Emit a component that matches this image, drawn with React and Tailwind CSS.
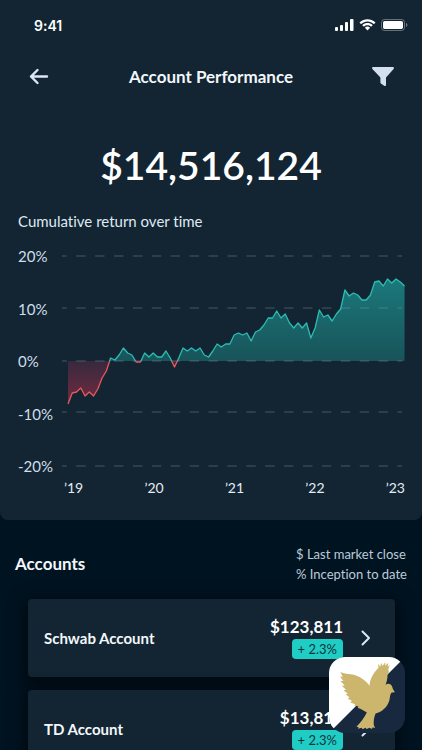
const returns = [
  -43, -32, -31, -27, -35, -31, -35, -28, -17, -10, 3, 1, 6, 13, 8, 6, -1, -1, 8, 4,
  8, 4, 4, 10, 3, -6, 3, 13, 10, 13, 10, 13, 6, 4, 10, 17, 14, 17, 17, 26,
  28, 26, 28, 20, 29, 31, 36, 43, 43, 50, 43, 47, 38, 33, 38, 33, 38, 23, 33, 51,
  44, 46, 40, 47, 52, 71, 65, 68, 66, 61, 61, 66, 79, 80, 75, 82, 78, 82, 79, 75,
];

const ZERO = 115;
const START = 6;
const STEP = 4.26;
const END = START + STEP * (returns.length - 1);
const line = returns.map((v, i) => `${START + i * STEP},${ZERO - v}`).join(" ");
const area = `${START},${ZERO} ${line} ${END},${ZERO}`;
const gridLines = [10, 62, 115, 166, 220];

const accounts = [
  { name: "Schwab Account", value: "$123,811", change: "+ 2.3%" },
  { name: "TD Account", value: "$13,811", change: "+ 2.3%" },
];

function StatusBar() {
  return (
    <div className="flex h-[50px] items-center justify-between pr-[14px] pl-[34px]">
      <span className="font-['Inter',sans-serif] text-[14px] font-semibold">9:41</span>
      <div className="flex items-center gap-[5px]">
        <svg className="h-3 w-[19px]" viewBox="0 0 19 12" fill="#fff" aria-hidden="true">
          <rect x="0" y="8" width="3" height="4" rx="1" />
          <rect x="5" y="6" width="3" height="6" rx="1" />
          <rect x="10" y="3" width="3" height="9" rx="1" />
          <rect x="15" y="0" width="3.5" height="12" rx="1" />
        </svg>
        <svg className="h-3 w-[17px]" viewBox="0 0 17 12" fill="#fff" aria-hidden="true">
          <path d="M8.5 2.4c2.3 0 4.5.9 6.200 2.500.1.1.3.1.4 0l1.200-1.200c.1-.1.1-.3 0-.4C11.900-.9 5.100-.9.7 3.300c-.1.1-.1.3 0 .4l1.200 1.200c.1.1.3.1.4 0C4 3.300 6.200 2.400 8.500 2.400Z" />
          <path d="M8.500 6.300c1.300 0 2.500.5 3.400 1.300.1.1.3.1.4 0l1.200-1.200c.1-.1.1-.3 0-.4-2.800-2.600-7.200-2.600-10 0-.1.1-.1.3 0 .4l1.200 1.200c.1.1.3.1.4 0 .9-.8 2.100-1.300 3.400-1.300Z" />
          <path d="M10.900 9c.1-.1.1-.3 0-.4a3.700 3.700 0 0 0-4.800 0c-.1.1-.1.3 0 .4l2.200 2.300c.1.1.3.1.4 0Z" />
        </svg>
        <svg className="h-3 w-[27px]" viewBox="0 0 27 12" fill="none" aria-hidden="true">
          <rect x="0.500" y="0.500" width="23" height="11" rx="3" stroke="#fff" strokeOpacity="0.35" />
          <rect x="2" y="2" width="20" height="8" rx="1.700" fill="#fff" />
          <path d="M25 4v4c.8-.3 1.400-1.100 1.400-2S25.800 4.300 25 4Z" fill="#fff" fillOpacity="0.4" />
        </svg>
      </div>
    </div>
  );
}

function Header() {
  return (
    <header className="flex h-[54px] items-center justify-between px-7">
      <button type="button" aria-label="Back" className="text-[#dbe6f4]">
        <svg className="h-5 w-[22px]" viewBox="0 0 22 20" fill="none" stroke="currentColor" strokeWidth="2.400" strokeLinecap="round" strokeLinejoin="round">
          <path d="M19 9.500H3M9.500 3 3 9.500 9.500 16" />
        </svg>
      </button>
      <h1 className="text-[17px] font-bold text-[#f2f7fb]">Account Performance</h1>
      <button type="button" aria-label="Filter" className="text-[#d4dfee]">
        <svg className="h-5 w-[22px]" viewBox="0 0 22 20" fill="currentColor">
          <path d="M1.200 0h19.600c1 0 1.500 1.100.8 1.900L14 10.600v7.300c0 1-1 1.500-1.800.9l-3.300-2.400c-.3-.3-.5-.6-.5-1v-4.800L.4 1.900C-.3 1.100.200 0 1.200 0Z" />
        </svg>
      </button>
    </header>
  );
}

function ReturnChart() {
  return (
    <div className="mt-[13px] grid grid-cols-[44px_1fr] pr-[17px] pl-[18px]">
      <div className="flex h-[230px] flex-col justify-between text-[15px] leading-5 text-[#cfdeeb]">
        <span>20%</span>
        <span>10%</span>
        <span>0%</span>
        <span>-10%</span>
        <span>-20%</span>
      </div>
      <svg className="h-[230px] w-full" viewBox="0 0 343 230" preserveAspectRatio="none" role="img" aria-label="Cumulative return over time">
        <defs>
          <linearGradient id="gain" gradientUnits="userSpaceOnUse" x1="0" y1="33" x2="0" y2={ZERO}>
            <stop offset="0" stopColor="#1b7e80" stopOpacity="0.95" />
            <stop offset="1" stopColor="#1a6467" stopOpacity="0.75" />
          </linearGradient>
          <linearGradient id="loss" gradientUnits="userSpaceOnUse" x1="0" y1={ZERO} x2="0" y2="158">
            <stop offset="0" stopColor="#7a3050" stopOpacity="0.35" />
            <stop offset="1" stopColor="#8f2c40" stopOpacity="0.8" />
          </linearGradient>
          <clipPath id="above">
            <rect x="0" y="0" width="343" height={ZERO} />
          </clipPath>
          <clipPath id="below">
            <rect x="0" y={ZERO} width="343" height="115" />
          </clipPath>
        </defs>
        <polygon points={area} fill="url(#gain)" clipPath="url(#above)" />
        <polygon points={area} fill="url(#loss)" clipPath="url(#below)" />
        <g stroke="#8aa0b8" strokeOpacity="0.28" strokeWidth="1.500" strokeDasharray="9.450 9.450" strokeDashoffset="4.700">
          {gridLines.map((y) => (
            <line key={y} x1="0" x2="340" y1={y} y2={y} />
          ))}
        </g>
        <polyline points={line} fill="none" stroke="#2bbdb4" strokeWidth="1.300" strokeLinejoin="round" clipPath="url(#above)" />
        <polyline points={line} fill="none" stroke="#e8595f" strokeWidth="1.300" strokeLinejoin="round" clipPath="url(#below)" />
      </svg>
      <div className="col-start-2 mt-[2px] flex justify-between pl-[2px] text-[14px] leading-5 text-[#e3ecf4]">
        <span>’19</span>
        <span>’20</span>
        <span>’21</span>
        <span>’22</span>
        <span>’23</span>
      </div>
    </div>
  );
}

function AccountCard({ name, value, change }) {
  return (
    <li>
      <button type="button" className="flex h-[78px] w-full items-center rounded bg-[#132532] pr-6 pl-4 text-left shadow-[0_4px_16px_4px_rgba(0,0,0,0.5)]">
        <span className="flex-1 text-[15px] font-bold text-[#f2f7fb]">{name}</span>
        <span className="flex flex-col items-end">
          <span className="text-[17px] leading-6 font-bold text-white">{value}</span>
          <span className="mb-[2px] rounded bg-[#1fcdc5] px-[6px] text-[13px] leading-5 text-[#10323c]">{change}</span>
        </span>
        <svg className="ml-[18px] h-4 w-[10px]" viewBox="0 0 10 16" fill="none" stroke="#dbe6f4" strokeWidth="2" strokeLinecap="round" strokeLinejoin="round" aria-hidden="true">
          <path d="M1.500 1.500 8 8l-6.500 6.500" />
        </svg>
      </button>
    </li>
  );
}

function AppBadge() {
  return (
    <div className="absolute right-[17px] bottom-[17px] overflow-hidden rounded-[16px]">
      <svg className="size-19" viewBox="0 0 227 227" role="img" aria-label="Dove logo">
        <rect width="227" height="227" fill="#18293f" />
        <path d="M0 0h227L0 227Z" fill="#fff" />
        <path
          fill="#ccb56c"
          d="M34 45 C48 52 68 50 82 56 C98 62 113 73 121 86 C122 68 130 49 148 32 L146 20 L153 29 L156 17 L160 27 L168 15 L168 26 L177 17 L175 29 L181 24 L177 37 L179 44 L175 52 C175 64 172 75 169 83 C176 78 184 80 188 87 C190 91 190 96 197 105 L188 106 C182 109 183 119 180 131 C174 150 159 164 139 169 C135 180 132 193 134 204 L138 213 L131 210 L128 215 L121 211 L113 215 L108 211 L101 216 L97 211 L87 214 L88 209 L82 208 C94 196 106 181 113 166 C105 160 96 155 86 152 L88 148 L75 145 L78 141 L64 136 L68 131 L56 124 L61 120 L50 112 L56 109 L43 100 L51 98 L38 86 L47 85 L34 72 L43 72 L33 58 L41 59 Z"
        />
      </svg>
    </div>
  );
}

export default function App() {
  return (
    <div className="relative h-screen overflow-hidden bg-[#001321] font-['Lato',sans-serif] text-white [font-variant-ligatures:none]">
      <section className="rounded-b-lg bg-[#132532] pb-[22px]">
        <StatusBar />
        <Header />
        <p className="mt-[37px] text-center text-[39px] leading-12 font-semibold">$14,516,124</p>
        <h2 className="mt-5 px-[18px] text-[15px] leading-6 text-[#dfe9f2]">Cumulative return over time</h2>
        <ReturnChart />
      </section>
      <main className="pt-6">
        <div className="flex items-center justify-between px-[15px]">
          <h2 className="text-[17px] font-bold text-[#f2f7fb]">Accounts</h2>
          <div className="text-[13px] leading-5 text-[#bccbda]">
            <p>$ Last market close</p>
            <p>% Inception to date</p>
          </div>
        </div>
        <ul className="mt-[15px] flex flex-col gap-[13px] pr-[27px] pl-7">
          {accounts.map((account) => (
            <AccountCard key={account.name} {...account} />
          ))}
        </ul>
      </main>
      <AppBadge />
    </div>
  );
}
